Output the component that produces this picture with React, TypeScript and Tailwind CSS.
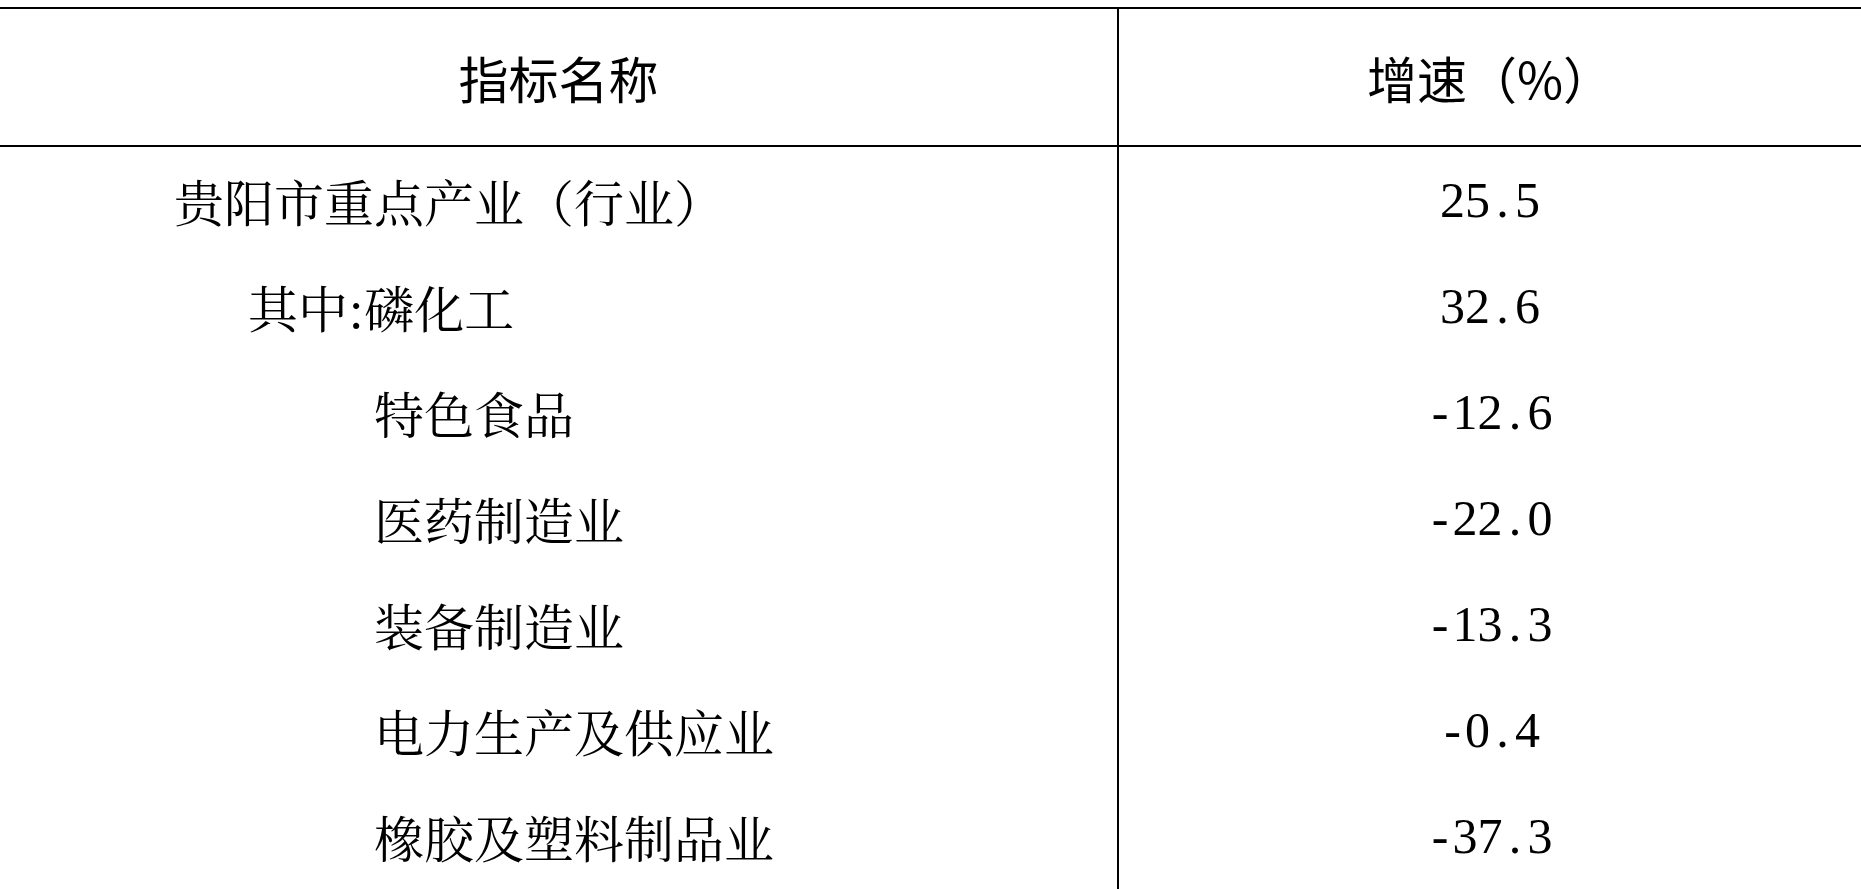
const rows: { name: string; indent: string; value: string }[] = [
  { name: "贵阳市重点产业（行业）", indent: "pl-[174px]", value: "25.5" },
  { name: "其中:磷化工", indent: "pl-[248px]", value: "32.6" },
  { name: "特色食品", indent: "pl-[374px]", value: "-12.6" },
  { name: "医药制造业", indent: "pl-[374px]", value: "-22.0" },
  { name: "装备制造业", indent: "pl-[374px]", value: "-13.3" },
  { name: "电力生产及供应业", indent: "pl-[374px]", value: "-0.4" },
  { name: "橡胶及塑料制品业", indent: "pl-[374px]", value: "-37.3" },
];

const serif = "font-['Noto_Serif_CJK_SC','Noto_Sans_CJK_SC',serif]";

// half-width digits like SimSun: every char gets the same box
function Num({ value }: { value: string }) {
  return (
    <span className="flex font-['Liberation_Serif',serif] text-[50px] leading-none text-black">
      {value.split("").map((ch, i) => (
        <span key={i} className="inline-block w-[25px] text-center">
          {ch}
        </span>
      ))}
    </span>
  );
}

export default function App() {
  return (
    <div className="h-[889px] overflow-hidden bg-white pt-[7px]">
      <div className="border-t-2 border-black">
        <div className="grid h-[138px] grid-cols-[1119px_1fr] border-b-2 border-black font-['Noto_Sans_CJK_SC',sans-serif] text-[50px] leading-none text-black">
          <div className="flex items-center justify-center border-r-2 border-black">
            指标名称
          </div>
          <div className="flex items-center justify-center">增速（%）</div>
        </div>
        {rows.map((row) => (
          <div key={row.name} className="grid h-[106px] grid-cols-[1119px_1fr]">
            <div
              className={`flex items-center border-r-2 border-black ${row.indent} ${serif} text-[50px] leading-none text-black`}
            >
              {row.name}
            </div>
            <div className="flex items-center justify-center">
              <Num value={row.value} />
            </div>
          </div>
        ))}
      </div>
    </div>
  );
}
